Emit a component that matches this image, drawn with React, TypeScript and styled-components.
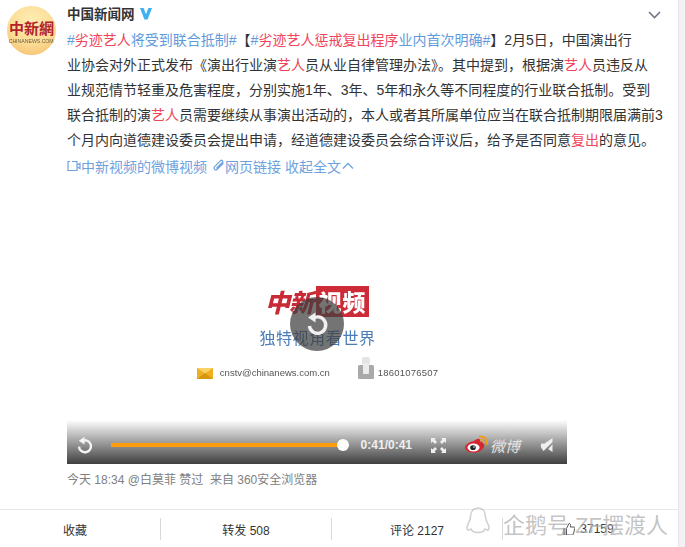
import React from 'react';
import styled, { createGlobalStyle } from 'styled-components';

const GlobalStyle = createGlobalStyle`
  html, body {
    margin: 0;
    padding: 0;
    background: #f2f2f5;
    overflow: hidden;
  }
  body {
    font-family: "Liberation Sans", "Noto Sans CJK SC", sans-serif;
    color: #333;
  }
`;

const Page = styled.div`
  position: relative;
  width: 685px;
  height: 547px;
  overflow: hidden;
`;

const Card = styled.div`
  width: 679px;
  height: 547px;
  background: #fff;
  border-right: 1px solid #e6e6e6;
  box-sizing: border-box;
  display: flex;
  flex-direction: column;
`;

const Body = styled.div`
  display: flex;
  height: 510px;
  padding-left: 7px;
  gap: 11px;
  box-sizing: border-box;
  border-bottom: 1px solid #e8e8e8;
`;

const Avatar = styled.div`
  width: 49px;
  height: 49px;
  margin-top: 6px;
  flex: none;
  border-radius: 50%;
  background: radial-gradient(circle at 50% 30%, #ffecb4 0%, #fbdc94 55%, #f3b866 100%);
  display: flex;
  flex-direction: column;
  align-items: center;
  justify-content: center;
`;

const AvatarMark = styled.div`
  font-family: "Noto Sans CJK SC", sans-serif;
  font-weight: 700;
  font-size: 15px;
  line-height: 18px;
  margin-top: 3px;
  color: #b3212a;
  white-space: nowrap;
`;

const AvatarUrl = styled.div`
  font-size: 6px;
  line-height: 8px;
  color: #6b5a3a;
  transform: scale(0.86);
  white-space: nowrap;
`;

const Main = styled.div`
  flex: 1;
  min-width: 0;
  position: relative;
`;

const NameRow = styled.div`
  display: flex;
  align-items: center;
  gap: 4px;
  height: 28px;
  padding-bottom: 2px;
  box-sizing: border-box;
`;

const Name = styled.span`
  font-size: 13.5px;
  font-weight: 700;
  color: #333;
`;

const MoreChevron = styled.svg`
  position: absolute;
  top: 11px;
  right: 17px;
`;

const Line = styled.div`
  font-size: 14px;
  line-height: 25px;
  height: 25px;
  white-space: nowrap;
  color: #333;
`;

const Topic = styled.span`
  color: #5f9bdc;
`;

const Hot = styled.span`
  color: #f0465c;
`;

const LinkRow = styled.div`
  display: flex;
  align-items: center;
  height: 25px;
  font-size: 14px;
  color: #6ea2df;
  white-space: nowrap;
`;

const LinkIcon = styled.svg<{ $gap?: number }>`
  flex: none;
  margin-left: ${p => p.$gap ?? 0}px;
`;

const LinkGap = styled.span`
  width: 4px;
`;

const Player = styled.div`
  width: 500px;
  height: 286px;
  position: relative;
  display: flex;
  flex-direction: column;
`;

const Canvas = styled.div`
  flex: 1;
  display: flex;
  flex-direction: column;
  align-items: center;
  padding-top: 105px;
  box-sizing: border-box;
`;

const Brand = styled.div`
  display: flex;
  align-items: center;
  gap: 3px;
  height: 36px;
  filter: blur(0.5px);
`;

const BrandScript = styled.span`
  font-family: "Noto Sans CJK SC", serif;
  font-weight: 900;
  font-size: 25px;
  line-height: 36px;
  letter-spacing: -1px;
  color: #c82a36;
  font-style: italic;
`;

const BrandBox = styled.span`
  width: 53px;
  height: 31px;
  background: #cd2b37;
  color: #fff;
  font-family: "Noto Sans CJK SC", sans-serif;
  font-weight: 900;
  font-size: 23px;
  line-height: 31px;
  letter-spacing: 1px;
  text-align: center;
  white-space: nowrap;
`;

const Slogan = styled.div`
  margin-top: 9px;
  margin-left: 1px;
  font-size: 16px;
  line-height: 22px;
  letter-spacing: 0.6px;
  color: #4a7cb8;
  filter: blur(0.3px);
`;

const ContactRow = styled.div`
  display: flex;
  align-items: flex-end;
  margin-top: 5px;
  margin-left: 1px;
  height: 24px;
  font-size: 9.5px;
  line-height: 12px;
  color: #555;
  filter: blur(0.25px);
`;

const Envelope = styled.svg`
  margin-right: 7px;
  flex: none;
`;

const Phone = styled.svg`
  margin-left: 28px;
  margin-right: 4px;
  flex: none;
`;

const PhoneNumber = styled.span`
  letter-spacing: 0.2px;
`;

const ReplayOverlay = styled.div`
  position: absolute;
  left: 223px;
  top: 119px;
  width: 54px;
  height: 54px;
  border-radius: 50%;
  background: rgba(62, 62, 62, 0.72);
  display: flex;
  align-items: center;
  justify-content: center;
`;

const Controls = styled.div`
  height: 44px;
  flex: none;
  display: flex;
  align-items: center;
  padding: 6px 12px 0 10px;
  box-sizing: border-box;
  background: linear-gradient(180deg, #ffffff 0%, #a8a8a8 45%, #3f3f3f 100%);
`;

const Progress = styled.div`
  width: 234px;
  height: 4px;
  margin-left: 18px;
  position: relative;
  background: #ff9c0c;
`;

const Knob = styled.div`
  position: absolute;
  right: -5px;
  top: -4px;
  width: 12px;
  height: 12px;
  border-radius: 50%;
  background: #fff;
`;

const Time = styled.span`
  margin-left: 17px;
  font-size: 12px;
  font-weight: 700;
  color: #efefef;
  white-space: nowrap;
`;

const Fullscreen = styled.svg`
  margin-left: 19px;
  flex: none;
`;

const WeiboMark = styled.div`
  display: flex;
  align-items: center;
  flex: none;
  margin-left: 18px;
`;

const WeiboText = styled.span`
  font-size: 15px;
  font-style: italic;
  color: #e4e4e4;
  margin-left: 1px;
  white-space: nowrap;
`;

const Mute = styled.svg`
  margin-left: 20px;
  flex: none;
`;

const Meta = styled.div`
  margin-top: 8px;
  font-size: 12px;
  line-height: 17px;
  color: #808080;
  white-space: nowrap;
`;

const Actions = styled.div`
  display: grid;
  grid-template-columns: repeat(4, 171px);
  margin-left: -10px;
  padding-top: 8px;
`;

const Action = styled.div<{ $last?: boolean }>`
  height: 22px;
  display: flex;
  align-items: center;
  justify-content: center;
  gap: ${p => (p.$last ? 5 : 2)}px;
  font-size: 12px;
  color: #333;
  border-right: ${p => (p.$last ? 'none' : '1px solid #d9d9d9')};
  box-sizing: border-box;
`;

const Watermark = styled.div`
  position: absolute;
  left: 466px;
  top: 505px;
  display: flex;
  align-items: center;
  gap: 13px;
  height: 36px;
  font-size: 22px;
  color: rgba(110, 110, 110, 0.42);
  text-shadow: 0 0 2px rgba(255, 255, 255, 0.8);
  white-space: nowrap;
  pointer-events: none;
`;

export default function App() {
  return (
    <Page>
      <GlobalStyle />
      <Card>
        <Body>
          <Avatar>
            <AvatarMark>中新網</AvatarMark>
            <AvatarUrl>CHINANEWS.COM</AvatarUrl>
          </Avatar>
          <Main>
            <NameRow>
              <Name>中国新闻网</Name>
              <svg width="14" height="13" viewBox="0 0 14 13">
                <path d="M1 1h3.6L7 7.2 9.4 1H13L8.6 12.4H5.4z" fill="#3fb1f2" />
              </svg>
            </NameRow>
            <MoreChevron width="13" height="8" viewBox="0 0 13 8" fill="none">
              <path d="M1 1l5.5 5.5L12 1" stroke="#6f7886" strokeWidth="1.6" />
            </MoreChevron>

            <Line>
              <Topic>#<Hot>劣迹艺人</Hot>将受到联合抵制#</Topic>【<Topic>#<Hot>劣迹艺人惩戒复出程序</Hot>业内首次明确#</Topic>】2月5日，中国演出行
            </Line>
            <Line>业协会对外正式发布《演出行业演<Hot>艺人</Hot>员从业自律管理办法》。其中提到，根据演<Hot>艺人</Hot>员违反从</Line>
            <Line>业规范情节轻重及危害程度，分别实施1年、3年、5年和永久等不同程度的行业联合抵制。受到</Line>
            <Line>联合抵制的演<Hot>艺人</Hot>员需要继续从事演出活动的，本人或者其所属单位应当在联合抵制期限届满前3</Line>
            <Line>个月内向道德建设委员会提出申请，经道德建设委员会综合评议后，给予是否同意<Hot>复出</Hot>的意见。</Line>
            <LinkRow>
              <LinkIcon width="14" height="12" viewBox="0 0 14 12" fill="none">
                <path d="M3 1.5H1v9h9v-9H5" stroke="#6ea2df" strokeWidth="1.2" />
                <path d="M10.5 5l2.5-1.6v5.2L10.5 7" stroke="#6ea2df" strokeWidth="1.2" />
              </LinkIcon>
              中新视频的微博视频
              <LinkIcon $gap={5} width="13" height="13" viewBox="0 0 13 13" fill="none">
                <path d="M11 4.5L5.2 10.3a1.8 1.8 0 0 1-2.6-2.6l6-6a1.2 1.2 0 0 1 1.8 1.8L4.8 9" stroke="#6ea2df" strokeWidth="1.2" strokeLinecap="round" />
              </LinkIcon>
              网页链接
              <LinkGap />
              收起全文
              <LinkIcon $gap={1} width="12" height="8" viewBox="0 0 12 8" fill="none">
                <path d="M1 6.5L6 1.5l5 5" stroke="#6ea2df" strokeWidth="1.3" />
              </LinkIcon>
            </LinkRow>

            <Player>
              <Canvas>
                <Brand>
                  <BrandScript>中新</BrandScript>
                  <BrandBox>视频</BrandBox>
                </Brand>
                <Slogan>独特视角看世界</Slogan>
                <ContactRow>
                  <Envelope width="16" height="11" viewBox="0 0 16 11">
                    <rect width="16" height="11" fill="#eeb021" />
                    <path d="M0 0l8 5.5L16 0z" fill="#f7d267" />
                    <path d="M0 11l8-6 8 6z" fill="#d8960f" />
                  </Envelope>
                  <span>cnstv@chinanews.com.cn</span>
                  <Phone width="16" height="22" viewBox="0 0 16 22">
                    <rect x="4" y="0" width="8" height="8" rx="2" fill="#e4e4e4" />
                    <rect x="0" y="8" width="16" height="14" rx="1.5" fill="#a9a9ab" />
                    <rect x="5" y="6" width="6" height="11" rx="1" fill="#ececec" />
                  </Phone>
                  <PhoneNumber>18601076507</PhoneNumber>
                </ContactRow>
              </Canvas>
              <ReplayOverlay>
                <svg width="26" height="26" viewBox="0 0 26 26" fill="none">
                  <path d="M8 8a8.2 8.2 0 1 1-2.6 7" stroke="#f1f1f1" strokeWidth="3.4" />
                  <path d="M11.5 1.5v10L4 6.5z" fill="#f1f1f1" />
                </svg>
              </ReplayOverlay>
              <Controls>
                <svg width="16" height="18" viewBox="0 0 16 18" fill="none">
                  <path d="M4.2 5.6a6 6 0 1 1-2.2 5" stroke="#f4f4f4" strokeWidth="2.4" />
                  <path d="M7.6 0.8v7.6L1.8 4.6z" fill="#f4f4f4" />
                </svg>
                <Progress>
                  <Knob />
                </Progress>
                <Time>0:41/0:41</Time>
                <Fullscreen width="15" height="15" viewBox="0 0 15 15" fill="#efefef">
                  <path d="M0 0h5L3.6 1.6 6 4 4 6 1.6 3.6 0 5z" />
                  <path d="M15 0v5l-1.6-1.4L11 6 9 4l2.4-2.4L10 0z" />
                  <path d="M0 15v-5l1.6 1.4L4 9l2 2-2.4 2.4L5 15z" />
                  <path d="M15 15h-5l1.4-1.6L9 11l2-2 2.4 2.4L15 10z" />
                </Fullscreen>
                <WeiboMark>
                  <svg width="25" height="20" viewBox="0 0 25 20" fill="none">
                    <path d="M10 6c3-2.5 5.6-2.8 6-1 .2 1-.2 1.6.4 1.7 2.3.3 3.8 1.6 3.8 3.4 0 4-5 7.6-10.4 7.6C5 17.700 1 15.500 1 12.300 1 10.300 4.700 7 10 6z" fill="#d9232e" />
                    <ellipse cx="9.500" cy="12.500" rx="6" ry="4" fill="#fff" />
                    <ellipse cx="9" cy="12.700" rx="2.800" ry="2.400" fill="#222" />
                    <circle cx="10" cy="12" r="0.800" fill="#fff" />
                    <path d="M16 1.500a6.500 6.500 0 0 1 7 7.500" stroke="#f19c1f" strokeWidth="2" strokeLinecap="round" />
                    <path d="M16.500 4.800a3 3 0 0 1 3.300 3.400" stroke="#f19c1f" strokeWidth="1.400" strokeLinecap="round" />
                  </svg>
                  <WeiboText>微博</WeiboText>
                </WeiboMark>
                <Mute width="15" height="14" viewBox="0 0 15 14" fill="#efefef">
                  <path d="M1 5.500h3.500L12.500 0v4L3.500 13 0.800 9z" />
                  <path d="M12.500 6.500V14L8.200 11z" />
                </Mute>
              </Controls>
            </Player>

            <Meta>今天 18:34 @白莫菲 赞过&nbsp;&nbsp;来自 360安全浏览器</Meta>
          </Main>
        </Body>
        <Actions>
          <Action>收藏</Action>
          <Action>转发 508</Action>
          <Action>评论 2127</Action>
          <Action $last>
            <svg width="12" height="12" viewBox="0 0 12 12">
              <path d="M0 5h2.500v7H0z" fill="#6f7886" />
              <path d="M3.500 5.500L6 .5c1.500 0 1.800 1.300 1.300 3.500H11c1 0 1 1 .7 1.800l-1.300 5.400c-.2.500-.5.800-1 .800H3.500z" fill="none" stroke="#555" strokeWidth="1" />
            </svg>
            37159
          </Action>
        </Actions>
      </Card>
      <Watermark>
        <svg width="24" height="32" viewBox="0 0 24 32" fill="none">
          <path d="M12 1c-5 0-7.500 4-7.500 9 0 4-3.500 7-3.500 11s3 1 4 1c1 3 5 3.500 7 3.500s6-.5 7-3.500c1 0 4 3 4-1s-3.500-7-3.500-11c0-5-2.500-9-7.500-9z" stroke="rgba(120,120,120,0.35)" strokeWidth="1.600" />
        </svg>
        <span>企鹅号 ZF摆渡人</span>
      </Watermark>
    </Page>
  );
}
